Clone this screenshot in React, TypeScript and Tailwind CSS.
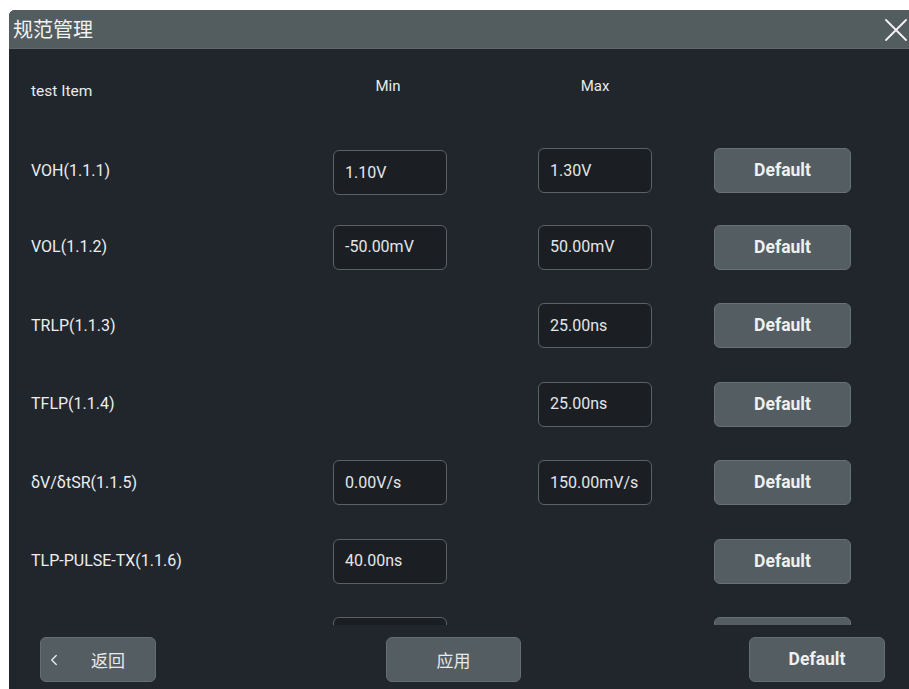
import { ChevronLeft } from "lucide-react";

interface SpecRow {
    name: string;
    min?: string;
    max?: string;
};

const rows: SpecRow[] = [
    { name: "VOH(1.1.1)", min: "1.10V", max: "1.30V" },
    { name: "VOL(1.1.2)", min: "-50.00mV", max: "50.00mV" },
    { name: "TRLP(1.1.3)", max: "25.00ns" },
    { name: "TFLP(1.1.4)", max: "25.00ns" },
    { name: "δV/δtSR(1.1.5)", min: "0.00V/s", max: "150.00mV/s" },
    { name: "TLP-PULSE-TX(1.1.6)", min: "40.00ns" },
];

const font = "font-['Roboto','Noto_Sans_CJK_SC',sans-serif]";
const cols = "grid-cols-[302px_205px_176px_137px]";

function ValueBox({ value, className }: { value?: string; className?: string }) {
    return (
        <div
            className={`flex h-[45px] w-[114px] items-center rounded-[6px] border border-[#5b6267] bg-[#1b1f24] pl-[11px] text-[16px] text-[#e4e6e8] ${className ?? ""}`}
        >
            {value}
        </div>
    );
}

function DefaultButton({ label = "Default" }: { label?: string }) {
    return (
        <button className="flex h-[45px] w-[137px] items-center justify-center rounded-[6px] border border-[#687175] bg-[#545d61] text-[17.5px] font-bold text-[#eef0f1]">
            {label}
        </button>
    );
}

export default function App() {
    return (
        <div className={`h-[689px] w-[909px] overflow-hidden bg-white pl-[9px] pt-[10px] ${font}`}>
            <div className="flex h-[679px] flex-col overflow-hidden rounded-tl-[6px] bg-[#21262c]">
                {/* title bar */}
                <div className="flex h-[39px] shrink-0 items-center justify-between border-b border-[#5e676a] bg-[#535c5f] pl-[4px] pr-[2px]">
                    <span className="font-['Noto_Sans_CJK_SC',sans-serif] text-[20px] text-[#f2f2f2]">规范管理</span>
                    <svg width="22" height="22" viewBox="0 0 22 22" className="mt-[2px] text-[#f4f4f4]">
                        <path d="M1 1L21 21M21 1L1 21" stroke="currentColor" strokeWidth="1.8" strokeLinecap="round" />
                    </svg>
                </div>

                <div className="h-[576px] shrink-0 overflow-hidden">
                    <div className={`grid h-[97px] ${cols} pl-[22px] text-[15px] text-[#e8eaeb]`}>
                        <span className="pt-[31px] text-[15.5px]">test Item</span>
                        <span className="w-[110px] pt-[26px] text-center">Min</span>
                        <span className="w-[114px] pt-[26px] text-center">Max</span>
                        <span />
                    </div>

                    <div className="flex flex-col gap-[33.5px] pl-[22px]">
                        {rows.map((row, i) => (
                            <div key={row.name} className={`grid h-[45px] ${cols} items-center`}>
                                <span className="text-[16px] text-[#eceeef]">{row.name}</span>
                                <div>{row.min && <ValueBox value={row.min} className={i === 0 ? "mt-[4px]" : ""} />}</div>
                                <div>{row.max && <ValueBox value={row.max} />}</div>
                                <DefaultButton />
                            </div>
                        ))}
                        {/* next row, only its top edge shows */}
                        <div className={`grid h-[45px] ${cols} items-center`}>
                            <span />
                            <div><ValueBox /></div>
                            <div />
                            <div className="h-[45px] w-[137px] rounded-[6px] border border-[#687175] bg-[#545d61]" />
                        </div>
                    </div>
                </div>

                {/* footer actions */}
                <div className="flex flex-1 items-start pl-[31px] pt-[12px]">
                    <button className="flex h-[45px] w-[116px] items-center rounded-[6px] border border-[#656e72] bg-[#545d61] pl-[4px] text-[#e8eaeb]">
                        <ChevronLeft size={18} strokeWidth={1.8} />
                        <span className="ml-[28px] font-['Noto_Sans_CJK_SC',sans-serif] text-[17px]">返回</span>
                    </button>
                    <button className="ml-[230px] flex h-[45px] w-[135px] items-center justify-center rounded-[6px] border border-[#656e72] bg-[#545d61] font-['Noto_Sans_CJK_SC',sans-serif] text-[17px] text-[#e8eaeb]">
                        应用
                    </button>
                    <button className="ml-[228px] flex h-[45px] w-[136px] items-center justify-center rounded-[6px] border border-[#656e72] bg-[#545d61] text-[17.5px] font-bold text-[#eef0f1]">
                        Default
                    </button>
                </div>
            </div>
        </div>
    );
}
